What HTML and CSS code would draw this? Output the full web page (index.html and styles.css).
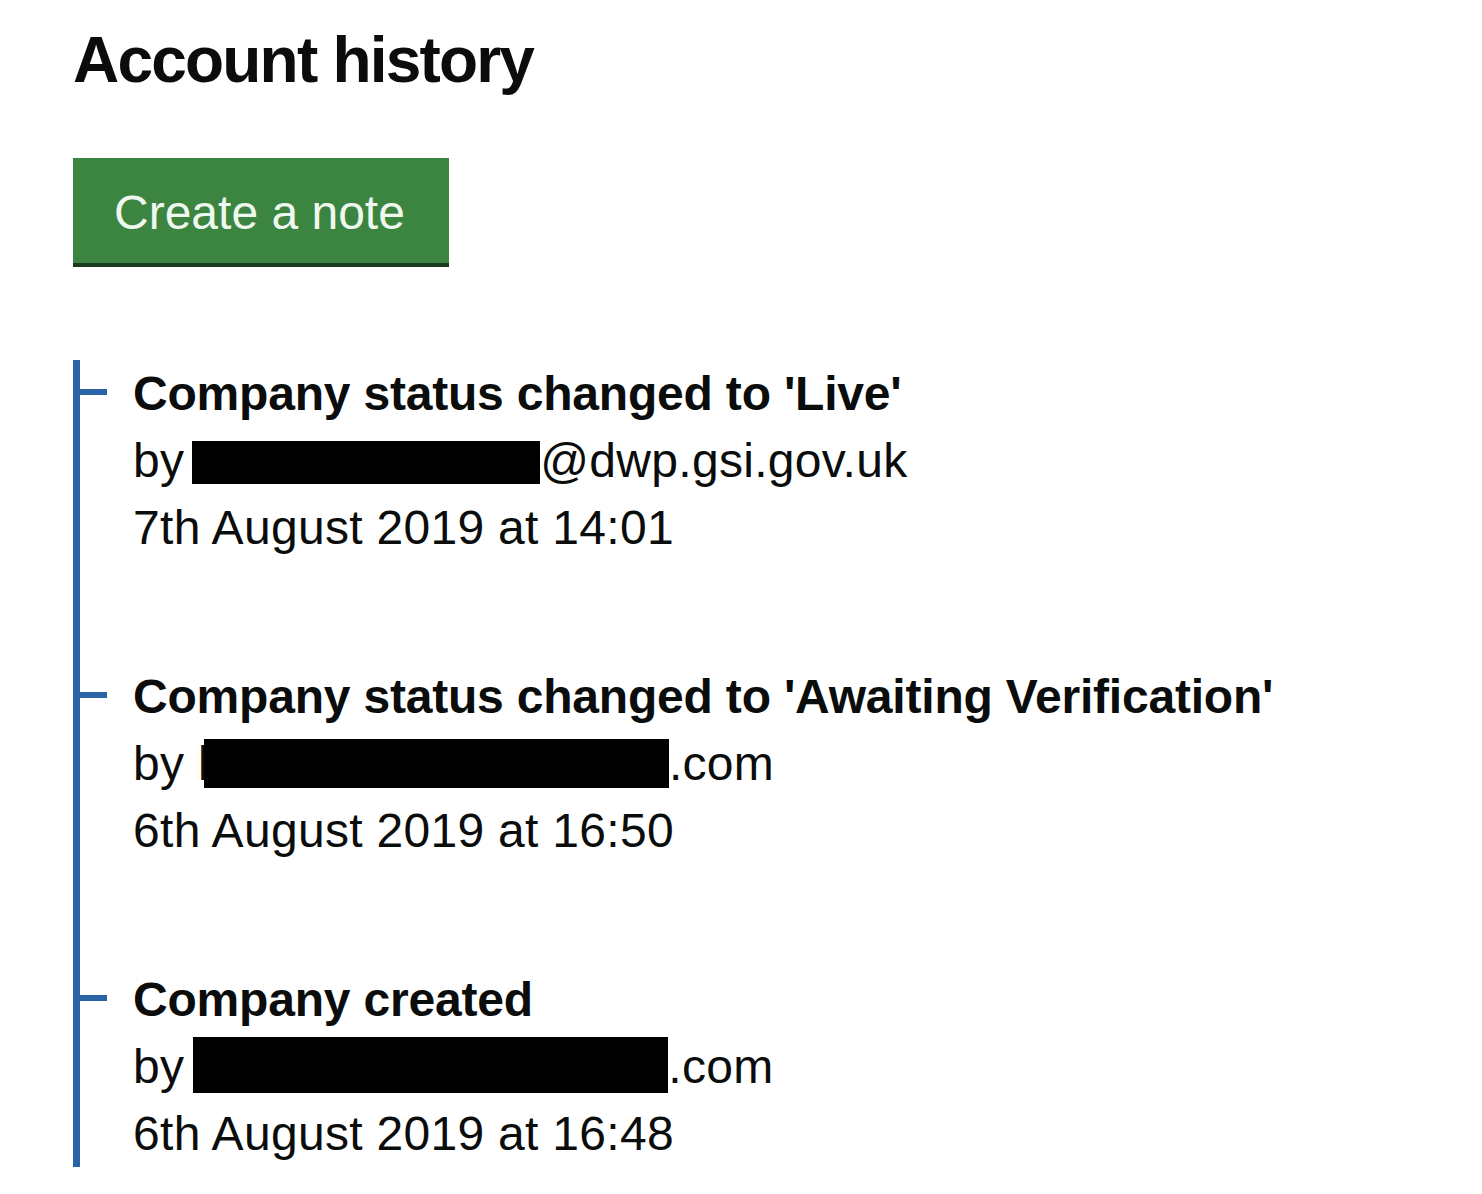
FILE: index.html
```html
<!DOCTYPE html>
<html lang="en">
<head>
<meta charset="utf-8">
<title>Account history</title>
<link rel="stylesheet" href="styles.css">
</head>
<body>
<main class="page">
  <h1 class="title">Account history</h1>
  <button class="button" type="button">Create a note</button>
  <ol class="timeline">
    <li class="event">
      <h2 class="event-title">Company status changed to 'Live'</h2>
      <p class="event-line">by<span class="redact r1"></span>@dwp.gsi.gov.uk</p>
      <p class="event-line">7th August 2019 at 14:01</p>
    </li>
    <li class="event">
      <h2 class="event-title">Company status changed to 'Awaiting Verification'</h2>
      <p class="event-line">by l<span class="redact r2"></span>.com</p>
      <p class="event-line">6th August 2019 at 16:50</p>
    </li>
    <li class="event">
      <h2 class="event-title">Company created</h2>
      <p class="event-line">by<span class="redact r3"></span>.com</p>
      <p class="event-line">6th August 2019 at 16:48</p>
    </li>
  </ol>
</main>
</body>
</html>
```
FILE: styles.css
```css
html, body {
  margin: 0;
  padding: 0;
  background: #ffffff;
}

body {
  font-family: "Liberation Sans", Arial, sans-serif;
  color: #0b0c0c;
}

.page {
  padding: 25px 0 0 73px;
  display: flex;
  flex-direction: column;
  align-items: flex-start;
}

.title {
  margin: 0;
  font-size: 64px;
  line-height: 70px;
  font-weight: 700;
  letter-spacing: -1.8px;
}

.button {
  margin-top: 63px;
  padding: 28px 44px 23px 41px;
  border: 0;
  border-radius: 0;
  background: #3b8541;
  color: #eef8ee;
  font-family: "Liberation Sans", Arial, sans-serif;
  font-size: 48px;
  line-height: 54px;
  font-weight: 400;
  box-shadow: 0 4px 0 #1c3a1f;
  cursor: pointer;
}

.timeline {
  list-style: none;
  margin: 97px 0 0 0;
  padding: 0 0 0 53px;
  border-left: 7px solid #2b64a6;
  align-self: stretch;
}

.event {
  position: relative;
  margin-bottom: 102px;
}

.event:last-child {
  margin-bottom: 0;
}

.event::before {
  content: "";
  position: absolute;
  left: -53px;
  top: 29px;
  width: 27px;
  height: 6px;
  background: #2b64a6;
}

.event-title {
  margin: 0;
  font-size: 48px;
  line-height: 67px;
  font-weight: 700;
  letter-spacing: -0.2px;
}

.event-line {
  margin: 0;
  font-size: 48px;
  line-height: 67px;
  font-weight: 400;
  letter-spacing: 0.3px;
}

.redact {
  display: inline-block;
  background: #000000;
  letter-spacing: 0;
}

.r1 {
  width: 348px;
  height: 43px;
  margin-left: 8px;
  vertical-align: -7px;
}

.r2 {
  width: 465px;
  height: 49px;
  margin-left: -5px;
  vertical-align: -8px;
}

.r3 {
  width: 475px;
  height: 56px;
  margin-left: 9px;
  vertical-align: -10px;
}
```
